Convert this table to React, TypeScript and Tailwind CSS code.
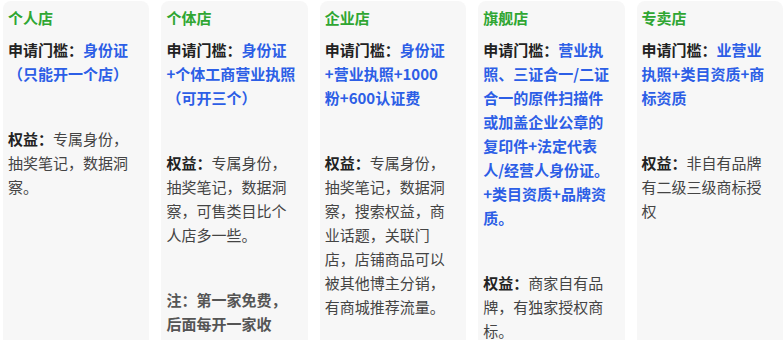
import React from "react";

type Shop = {
  name: string;
  req: string[];
  perks: string[];
  note?: string[];
};

const shops: Shop[] = [
  {
    name: "个人店",
    req: ["身份证", "（只能开一个店）"],
    perks: ["专属身份，", "抽奖笔记，数据洞", "察。"],
  },
  {
    name: "个体店",
    req: ["身份证", "+个体工商营业执照", "（可开三个）"],
    perks: ["专属身份，", "抽奖笔记，数据洞", "察，可售类目比个", "人店多一些。"],
    note: ["注：第一家免费，", "后面每开一家收", "取保证金。"],
  },
  {
    name: "企业店",
    req: ["身份证", "+营业执照+1000", "粉+600认证费"],
    perks: [
      "专属身份，",
      "抽奖笔记，数据洞",
      "察，搜索权益，商",
      "业话题，关联门",
      "店，店铺商品可以",
      "被其他博主分销，",
      "有商城推荐流量。",
    ],
  },
  {
    name: "旗舰店",
    req: [
      "营业执",
      "照、三证合一/二证",
      "合一的原件扫描件",
      "或加盖企业公章的",
      "复印件+法定代表",
      "人/经营人身份证。",
      "+类目资质+品牌资",
      "质。",
    ],
    perks: ["商家自有品", "牌，有独家授权商", "标。"],
  },
  {
    name: "专卖店",
    req: ["业营业", "执照+类目资质+商", "标资质"],
    perks: ["非自有品牌", "有二级三级商标授", "权"],
  },
];

const Lines = ({ lines }: { lines: string[] }) => (
  <>
    {lines.map((l, i) => (
      <React.Fragment key={i}>
        {i > 0 && <br />}
        {l}
      </React.Fragment>
    ))}
  </>
);

const Card = ({ shop }: { shop: Shop }) => (
  <div className="h-[400px] rounded-lg bg-[#f7f7f7] pl-[5px] pr-[6px] pt-[5px] text-[15px] leading-6 whitespace-nowrap">
    <div className="font-bold text-[#2fa632]">{shop.name}</div>
    <p className="mt-[8px]">
      <span className="font-bold text-[#222]">申请门槛：</span>
      <span className="font-bold text-[#2c5ee6]">
        <Lines lines={shop.req} />
      </span>
    </p>
    <p className="mt-[41px] text-[#444]">
      <span className="font-bold text-[#222]">权益：</span>
      <Lines lines={shop.perks} />
    </p>
    {shop.note && (
      <p className="mt-[41px] font-bold text-[#555]">
        <Lines lines={shop.note} />
      </p>
    )}
  </div>
);

export default function App() {
  return (
    <div className="h-[340px] overflow-hidden bg-white pl-[3px] pr-[1px] pt-[1px] font-['Noto_Sans_CJK_SC','Liberation_Sans',sans-serif]">
      <div className="grid grid-cols-5 gap-3">
        {shops.map((s) => (
          <Card key={s.name} shop={s} />
        ))}
      </div>
    </div>
  );
}
